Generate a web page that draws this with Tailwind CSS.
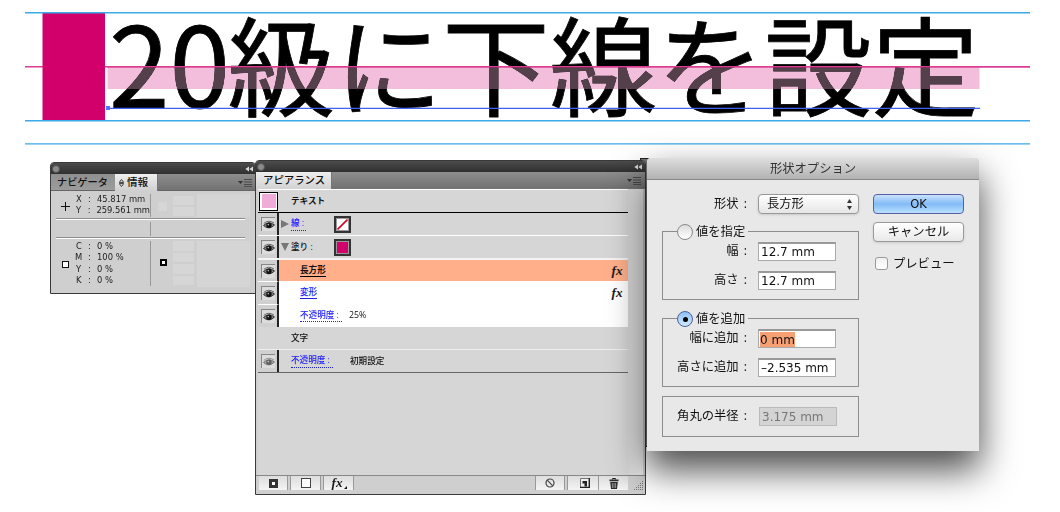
<!DOCTYPE html>
<html lang="ja">

<head>
    <meta charset="UTF-8">
    <meta name="viewport" content="width=device-width, initial-scale=1.0">
    <title>20級に下線を設定</title>
    <script src="https://cdn.jsdelivr.net/npm/@tailwindcss/browser@4"></script>
</head>

<body class="bg-white">

    <!--shared icons-->
    <svg class="hidden">
        <symbol id="eye" viewBox="0 0 12 10">
            <path d="M0.5 5.5 Q5.5 0.5 11.5 5 Q6 10.5 0.5 5.5Z" fill="#8a8a8a" stroke="#222" stroke-width="0.9" />
            <circle cx="6" cy="5.3" r="2.7" fill="#111" />
            <circle cx="5.3" cy="4.6" r="0.8" fill="#bbb" />
            <path d="M0.8 3.4 Q5.5 -0.6 11 3" fill="none" stroke="#555" stroke-width="0.9" />
        </symbol>
        <symbol id="collapse" viewBox="0 0 8 6">
            <path d="M4 0.5 L0.3 3 L4 5.5Z M8 0.5 L4.3 3 L8 5.5Z" fill="#d8d8d8" />
        </symbol>
        <symbol id="menu" viewBox="0 0 14 9">
            <path d="M0 3 H5 L2.5 6Z" fill="#333" />
            <path d="M6 1.5 H14 M6 4 H14 M6 6.5 H14 M6 8.6 H14" stroke="#4a4a4a" stroke-width="1" />
        </symbol>
        <symbol id="fx" viewBox="0 0 14 14">
            <text x="1.5" y="10.5" font-family="Liberation Serif, serif" font-style="italic" font-weight="bold" font-size="13.5" textLength="11" lengthAdjust="spacingAndGlyphs" fill="#1a1a1a">fx</text>
        </symbol>
    </svg>

    <div class="relative w-[1060px] h-[512px] overflow-hidden bg-white font-['Open_Sans','Noto_Sans_CJK_JP',sans-serif]">

        <!--artboard-->
        <svg class="absolute inset-0" width="1060" height="155" viewBox="0 0 1060 155" overflow="visible">
            <path d="M25 66.8 H1030" stroke="#dc3d92" stroke-width="1.5" />
            <rect x="42.5" y="13" width="62.5" height="107" fill="#d1006b" />
            <g font-family="Noto Sans CJK JP, sans-serif" fill="#000" stroke="#000" stroke-width="0.8">
                <text x="109" y="108" font-size="111" textLength="121" lengthAdjust="spacingAndGlyphs">20</text>
                <text x="227.5" y="108" font-size="107.4">級に下線を設定</text>
            </g>
            <!--underline bar, tints the letters it crosses-->
            <rect class="mix-blend-multiply" x="107.5" y="67.5" width="872" height="21.5" fill="#f3bedb" />
            <rect class="mix-blend-lighten" x="107.5" y="67.5" width="872" height="21.5" fill="#54404a" />
            <path d="M107 66.8 H1030" stroke="#dc3d92" stroke-width="1.4" />
            <path d="M25 12.7 H1030 M25 120.7 H1030 M25 143.9 H1030" stroke="#3ba9e4" stroke-width="1.4" />
            <path d="M108 108.4 H980" stroke="#3f62f5" stroke-width="1.2" />
            <rect x="106" y="106" width="4" height="4" fill="#4b74ff" />
        </svg>

        <!--info panel-->
        <div class="absolute left-[50px] top-[162px] w-[206px] h-[132px] flex flex-col rounded-t border border-[#3a3a3a] bg-[#cfcfcf] overflow-hidden">
            <div class="h-[11px] shrink-0 flex items-center justify-between pl-px pr-0.5 bg-linear-to-b from-[#4c4c4c] to-[#303030]">
                <div class="size-[8px] rounded-full bg-[#8a8a8a] border border-[#555]"></div>
                <svg class="w-[8px] h-[6px]"><use href="#collapse" /></svg>
            </div>
            <div class="h-[17px] shrink-0 flex items-center bg-linear-to-b from-[#8e8e8e] to-[#727272] border-b border-[#666] leading-none font-medium text-[#111]">
                <div class="w-[64px] h-full pl-[6px] pt-px flex items-center bg-linear-to-b from-[#8f8f8f] to-[#9c9c9c] whitespace-nowrap text-[10.2px]">ナビゲータ</div>
                <div class="w-[43px] h-[17px] pl-[4px] pt-px flex items-center gap-[3px] bg-linear-to-b from-[#eee] to-[#d0d0d0] border-r border-[#777] whitespace-nowrap text-[10.6px]">
                    <svg class="w-[5px] h-[8px] shrink-0" viewBox="0 0 5 8"><path d="M0.3 3.4 L2.5 0.5 L4.7 3.4Z M0.3 4.6 L2.5 7.5 L4.7 4.6Z" fill="#eee" stroke="#111" stroke-width="0.8" /></svg>
                    情報
                </div>
                <svg class="w-[14px] h-[9px] ml-auto mr-[3px]"><use href="#menu" /></svg>
            </div>
            <div class="flex-1 flex flex-col px-[5px] pt-[3px] text-[#222] font-['DejaVu_Sans',sans-serif]">
                <div class="flex h-[24px]">
                    <div class="w-[20px] flex items-center pl-[5px]">
                        <svg class="w-[9px] h-[9px]" viewBox="0 0 9 9"><path d="M4.5 0 V9 M0 4.5 H9" stroke="#111" stroke-width="1" /></svg>
                    </div>
                    <div class="w-[75px] h-[23px] border-r border-[#999] text-[8.4px] leading-[11px] whitespace-nowrap">
                        <div class="flex"><span class="w-[12px]">X</span><span class="w-[9px]">:</span>45.817 mm</div>
                        <div class="flex"><span class="w-[12px]">Y</span><span class="w-[9px]">:</span>259.561 mm</div>
                    </div>
                    <div class="size-[9px] mt-[8px] ml-[7px] bg-[#d6d6d6]"></div>
                    <div class="ml-[6px] w-[21px] flex flex-col gap-[2px] pt-[2px]">
                        <div class="h-[9px] bg-[#d6d6d6]"></div>
                        <div class="h-[9px] bg-[#d6d6d6]"></div>
                    </div>
                    <div class="ml-[3px] flex-1 h-[23px] bg-[#d5d5d5]"></div>
                </div>
                <div class="h-[2px] w-[189px] bg-[#8f8f8f] border-b border-white"></div>
                <div class="h-[17px] w-[95px] py-[1.5px]">
                    <div class="h-full border-r border-[#999]"></div>
                </div>
                <div class="h-[2px] w-[189px] bg-[#8f8f8f] border-b border-white"></div>
                <div class="flex h-[46px] pt-[2px]">
                    <div class="w-[20px] flex items-center pl-[6px] pt-[3px]">
                        <div class="size-[7px] border border-[#111] bg-white"></div>
                    </div>
                    <div class="w-[75px] h-[45px] border-r border-[#999] text-[8.4px] leading-[11.3px] whitespace-nowrap">
                        <div class="flex"><span class="w-[12px]">C</span><span class="w-[9px]">:</span>0 %</div>
                        <div class="flex"><span class="w-[12px] -ml-px mr-px">M</span><span class="w-[9px]">:</span>100 %</div>
                        <div class="flex"><span class="w-[12px]">Y</span><span class="w-[9px]">:</span>0 %</div>
                        <div class="flex"><span class="w-[12px]">K</span><span class="w-[9px]">:</span>0 %</div>
                    </div>
                    <div class="size-[7px] mt-[18px] ml-[9px] mr-[6px] border-2 border-black bg-white"></div>
                    <div class="w-[21px] flex flex-col gap-[2px]">
                        <div class="h-[9.5px] bg-[#d6d6d6]"></div>
                        <div class="h-[9.5px] bg-[#d6d6d6]"></div>
                        <div class="h-[9.5px] bg-[#d6d6d6]"></div>
                        <div class="h-[9.5px] bg-[#d6d6d6]"></div>
                    </div>
                    <div class="ml-[3px] flex-1 h-[46px] bg-[#d5d5d5]"></div>
                </div>
            </div>
        </div>

        <!--edge of the panel stacked behind-->
        <div class="absolute left-[640px] top-[158px] w-[10px] h-[289px] bg-[#777] border border-[#222]"></div>

        <!--appearance panel-->
        <div class="absolute left-[255px] top-[160px] w-[391px] h-[335px] flex flex-col rounded-t border border-[#3a3a3a] bg-[#cfcfcf] overflow-hidden text-[8.6px] leading-none text-[#111] font-medium">
            <div class="h-[11px] shrink-0 flex items-center justify-between pl-px pr-[3px] bg-linear-to-b from-[#4c4c4c] to-[#303030]">
                <div class="size-[8px] rounded-full bg-[#8a8a8a] border border-[#555]"></div>
                <svg class="w-[8px] h-[6px]"><use href="#collapse" /></svg>
            </div>
            <div class="h-[17px] shrink-0 flex items-center bg-linear-to-b from-[#8e8e8e] to-[#727272] border-b border-[#777]">
                <div class="w-[76px] h-[17px] pl-[7px] pt-px flex items-center bg-linear-to-b from-[#eee] to-[#d2d2d2] border-r border-[#777] text-[10.4px] whitespace-nowrap">アピアランス</div>
                <svg class="w-[14px] h-[9px] ml-auto mr-[4px]"><use href="#menu" /></svg>
            </div>

            <div class="flex-1 flex pl-[2px] pr-[2px]">
                <!--attribute list-->
                <div class="w-[370px] flex flex-col bg-[#d6d6d6] whitespace-nowrap">
                    <div class="h-[24px] flex items-center border-t border-white border-b border-b-black">
                        <div class="w-[19px] h-[19px] ml-px border border-black bg-white p-[1.5px]">
                            <div class="size-full bg-[#f0acd8]"></div>
                        </div>
                        <span class="ml-[13px] font-bold">テキスト</span>
                    </div>
                    <div class="h-[23px] flex items-center border-b border-white">
                        <div class="w-[21px] h-full flex items-center pl-[3px] border-r-2 border-[#222] bg-[#d0d0d0]"><div class="size-[14px] flex items-center justify-center border-l border-t border-[#888] bg-[#dcdcdc]"><svg class="w-[12px] h-[10px]"><use href="#eye" /></svg></div></div>
                        <svg class="w-[8px] h-[8px] ml-[2px]" viewBox="0 0 8 8"><path d="M0 0 L8 4 L0 8Z" fill="#777" /></svg>
                        <span class="ml-[2px] w-[15px] pt-[2px] pb-[2px] border-b border-dotted border-[#2020e0] text-[#2020ff]">線 :</span>
                        <div class="ml-[28px] size-[17px] border-2 border-[#333] bg-[#999] p-px">
                            <svg class="size-full" viewBox="0 0 11 11"><rect width="11" height="11" fill="#fff" /><path d="M0.5 10.5 L10.5 0.5" stroke="#d40024" stroke-width="1.6" /></svg>
                        </div>
                    </div>
                    <div class="h-[24px] flex items-center border-b-2 border-[#f4f4f4]">
                        <div class="w-[21px] h-full flex items-center pl-[3px] border-r-2 border-[#222] bg-[#d0d0d0]"><div class="size-[14px] flex items-center justify-center border-l border-t border-[#888] bg-[#dcdcdc]"><svg class="w-[12px] h-[10px]"><use href="#eye" /></svg></div></div>
                        <svg class="w-[8px] h-[8px] ml-[2px]" viewBox="0 0 8 8"><path d="M0 0 H8 L4 8Z" fill="#777" /></svg>
                        <span class="ml-[2px] w-[43px]">塗り :</span>
                        <div class="size-[17px] border-2 border-[#333] bg-[#999] p-px">
                            <div class="size-full bg-[#d1006b]"></div>
                        </div>
                    </div>
                    <div class="h-[21px] flex items-center bg-[#ffb08b]">
                        <div class="w-[21px] h-full flex items-center pl-[3px] border-r-2 border-[#222] bg-[#d0d0d0]"><div class="size-[14px] flex items-center justify-center border-l border-t border-[#888] bg-[#dcdcdc]"><svg class="w-[12px] h-[10px]"><use href="#eye" /></svg></div></div>
                        <span class="ml-[21px] pt-[2px] pb-[2px] font-bold border-b border-black">長方形</span>
                        <svg class="size-[14px] ml-auto mr-[4px]"><use href="#fx" /></svg>
                    </div>
                    <div class="h-[23px] flex items-center bg-white">
                        <div class="w-[21px] h-full flex items-center pl-[3px] border-r-2 border-[#222] border-t border-t-white bg-[#d0d0d0]"><div class="size-[14px] flex items-center justify-center border-l border-t border-[#888] bg-[#dcdcdc]"><svg class="w-[12px] h-[10px]"><use href="#eye" /></svg></div></div>
                        <span class="ml-[21px] pt-[2px] pb-[2px] border-b border-[#2020e0] text-[#2020ff]">変形</span>
                        <svg class="size-[14px] ml-auto mr-[4px]"><use href="#fx" /></svg>
                    </div>
                    <div class="h-[23px] flex items-center bg-white">
                        <div class="w-[21px] h-full flex items-center pl-[3px] border-r-2 border-[#222] border-t border-t-white bg-[#d0d0d0]"><div class="size-[14px] flex items-center justify-center border-l border-t border-[#888] bg-[#dcdcdc]"><svg class="w-[12px] h-[10px]"><use href="#eye" /></svg></div></div>
                        <span class="ml-[21px] w-[42px] pt-[2px] pb-[2px] border-b border-dotted border-[#2020e0] text-[#2020ff]">不透明度 :</span>
                        <span class="ml-[7px] text-[8.8px]">25%</span>
                    </div>
                    <div class="h-[22px] flex items-center pl-[33px] pt-px">文字</div>
                    <div class="h-[24px] flex items-center border-t border-t-[#eee] border-b border-b-[#666]">
                        <div class="w-[21px] h-full flex items-center pl-[3px] border-r-2 border-[#222] bg-[#d0d0d0]"><div class="size-[14px] flex items-center justify-center border-l border-t border-[#888] bg-[#dcdcdc]"><svg class="w-[12px] h-[10px] opacity-60"><use href="#eye" /></svg></div></div>
                        <span class="ml-[12px] w-[42px] pt-[2px] pb-[2px] border-b border-dotted border-[#2020e0] text-[#2020ff]">不透明度 :</span>
                        <span class="ml-[17px]">初期設定</span>
                    </div>
                </div>
                <!--scrollbar track-->
                <div class="flex-1 bg-linear-to-r from-[#d8d8d8] to-[#eee]"></div>
            </div>

            <!--footer buttons-->
            <div class="h-[19px] shrink-0 flex pl-[3px] pr-[2px] pb-[4px] border-t border-[#888]">
                <div class="w-[29px] flex items-center justify-center bg-linear-to-b from-[#ddd] to-[#f4f4f4] border-r border-[#999]">
                    <div class="size-[9px] border-3 border-[#333] bg-white"></div>
                </div>
                <div class="ml-[2px] w-[31px] flex items-center justify-center bg-linear-to-b from-[#ddd] to-[#f4f4f4] border-x border-[#999]">
                    <div class="size-[10px] border border-[#444] bg-white"></div>
                </div>
                <div class="ml-[2px] w-[31px] flex items-center justify-center bg-linear-to-b from-[#ddd] to-[#f4f4f4] border-x border-[#999]">
                    <svg class="w-[17px] h-[14px]" viewBox="0 0 17 14">
                        <text x="1.5" y="10.5" font-family="Liberation Serif, serif" font-style="italic" font-weight="bold" font-size="13.5" textLength="11" lengthAdjust="spacingAndGlyphs" fill="#1a1a1a">fx</text>
                        <path d="M17 10 V13 H14Z" fill="#111" />
                    </svg>
                </div>
                <div class="ml-auto w-[30px] flex items-center justify-center bg-linear-to-b from-[#ddd] to-[#f4f4f4] border-x border-[#999]">
                    <svg class="size-[10px]" viewBox="0 0 10 10"><circle cx="5" cy="5" r="4" fill="none" stroke="#444" stroke-width="1.2" /><path d="M2.2 2.2 L7.8 7.8" stroke="#444" stroke-width="1.2" /></svg>
                </div>
                <div class="ml-[2px] w-[31px] pl-[4px] flex items-center justify-center bg-linear-to-b from-[#ddd] to-[#f4f4f4] border-l border-[#999]">
                    <svg class="size-[10px]" viewBox="0 0 10 10"><path d="M0.5 0.5 H9.5 V9.5 H0.5Z" fill="#eee" stroke="#777" /><path d="M9.3 0 V9.5 H0" fill="none" stroke="#222" stroke-width="1.4" /><path d="M2.5 3 H7 V8.5 H4.5 V5.5 H2.5Z" fill="#222" /></svg>
                </div>
                <div class="w-[30px] flex items-center justify-center bg-linear-to-b from-[#ddd] to-[#f4f4f4] border-l border-[#999]">
                    <svg class="w-[10px] h-[11px]" viewBox="0 0 10 11"><path d="M3.5 1.5 V0.5 H6.5 V1.5" fill="none" stroke="#222" /><path d="M0.5 1.5 H9.5 V3.3 H0.5Z M1.2 4 H8.8 L8 11 H2Z" fill="#2a2a2a" /><path d="M3.4 5 V10 M5 5 V10 M6.6 5 V10" stroke="#bbb" stroke-width="0.7" /></svg>
                </div>
                <div class="w-[15px] flex items-end justify-end">
                    <svg class="size-[10px]" viewBox="0 0 10 10"><path d="M1 9.5 H10 M3 7.5 H10 M5 5.5 H10 M7 3.5 H10 M9 1.5 H10" stroke="#777" stroke-dasharray="1 1" /></svg>
                </div>
            </div>
        </div>

        <!--shape options dialog-->
        <div class="absolute left-[647px] top-[158px] w-[332px] h-[293px] rounded-t-[4px] bg-[#e8e8e8] shadow-[0_18px_36px_1px_rgba(0,0,0,0.7)] text-[12.3px] leading-none text-[#111]">
            <div class="h-[22px] pt-px flex items-center justify-center rounded-t-[4px] bg-linear-to-b from-[#dedede] to-[#b2b2b2] border-b border-[#888] text-[#333]">形状オプション</div>
            <div class="flex">
                <!--settings-->
                <div class="w-[197px] ml-[15px] pt-[14px]">
                    <div class="h-[20px] flex items-center">
                        <div class="w-[86px] text-right pr-px [word-spacing:2px]">形状 :</div>
                        <div class="ml-[10px] w-[101px] h-[20px] flex items-center justify-between pl-[8px] pr-[6px] rounded-[4px] border border-[#999] bg-linear-to-b from-white to-[#e6e6e6] shadow-sm">
                            長方形
                            <svg class="w-[5px] h-[11px]" viewBox="0 0 5 11"><path d="M0 4 L2.5 0 L5 4Z M0 7 L2.5 11 L5 7Z" fill="#333" /></svg>
                        </div>
                    </div>
                    <div class="mt-[17px] h-[69px] border border-[#8d8d8d]">
                        <div class="-mt-[8px] ml-[14px] h-[16px] w-[71px] flex items-center gap-[3px] bg-[#e8e8e8] whitespace-nowrap">
                            <div class="size-[16px] shrink-0 rounded-full border border-[#888] bg-linear-to-b from-[#ddd] to-white"></div>値を指定
                        </div>
                        <div class="h-[19px] mt-[2px] flex items-center">
                            <div class="w-[85px] text-right pr-px [word-spacing:2px]">幅 :</div>
                            <div class="ml-[10px] w-[78px] h-[19px] pl-[2px] flex items-center border border-[#aaa] border-t-2 border-t-[#999] bg-white text-[12px] font-['DejaVu_Sans']">12.7 mm</div>
                        </div>
                        <div class="h-[19px] mt-[10px] flex items-center">
                            <div class="w-[85px] text-right pr-px [word-spacing:2px]">高さ :</div>
                            <div class="ml-[10px] w-[78px] h-[19px] pl-[2px] flex items-center border border-[#aaa] border-t-2 border-t-[#999] bg-white text-[12px] font-['DejaVu_Sans']">12.7 mm</div>
                        </div>
                    </div>
                    <div class="mt-[18px] h-[69px] border border-[#8d8d8d]">
                        <div class="-mt-[8px] ml-[14px] h-[16px] w-[71px] flex items-center gap-[3px] bg-[#e8e8e8] whitespace-nowrap">
                            <div class="size-[16px] shrink-0 flex items-center justify-center rounded-full border border-[#4a5f9a] bg-linear-to-b from-[#8fc0f5] to-[#d0ecff]">
                                <div class="size-[5px] rounded-full bg-black"></div>
                            </div>値を追加
                        </div>
                        <div class="h-[19px] mt-[2px] flex items-center">
                            <div class="w-[85px] text-right pr-px [word-spacing:2px]">幅に追加 :</div>
                            <div class="ml-[10px] w-[78px] h-[19px] pl-px flex items-center border border-[#aaa] border-t-2 border-t-[#999] bg-white text-[12px] font-['DejaVu_Sans']"><span class="h-[15px] pt-[2px] bg-[#f7a073]">0 mm</span></div>
                        </div>
                        <div class="h-[20px] mt-[9px] flex items-center">
                            <div class="w-[85px] text-right pr-px [word-spacing:2px]">高さに追加 :</div>
                            <div class="ml-[10px] w-[78px] h-[19px] pl-[2px] flex items-center border border-[#aaa] border-t-2 border-t-[#999] bg-white text-[12px] whitespace-nowrap font-['DejaVu_Sans']">–2.535 mm</div>
                        </div>
                    </div>
                    <div class="mt-[9px] h-[41px] flex items-center border border-[#8d8d8d]">
                        <div class="w-[85px] text-right pr-px [word-spacing:2px]">角丸の半径 :</div>
                        <div class="ml-[11px] w-[78px] h-[19px] pl-[2px] flex items-center border border-[#bbb] bg-[#d4d4d4] text-[12px] text-[#777] font-['DejaVu_Sans']">3.175 mm</div>
                    </div>
                </div>
                <!--buttons-->
                <div class="ml-[14px] pt-[14px] w-[91px]">
                    <div class="h-[20px] pt-px flex items-center justify-center rounded-[4px] border border-[#5560a8] bg-linear-to-b from-[#c9e2fb] via-[#83bbf6] to-[#b9e2ff] font-['DejaVu_Sans'] text-[11.5px]">OK</div>
                    <div class="mt-[8px] h-[20px] pt-px flex items-center justify-center rounded-[4px] border border-[#999] bg-linear-to-b from-white to-[#e9e9e9] shadow-sm">キャンセル</div>
                    <div class="mt-[15px] ml-[2px] flex items-center gap-[5px] whitespace-nowrap">
                        <div class="size-[13px] shrink-0 rounded-[3px] border border-[#999] bg-linear-to-b from-[#f0f0f0] to-white"></div>
                        <span class="pt-px">プレビュー</span>
                    </div>
                </div>
            </div>
        </div>
    </div>

</body>

</html>
